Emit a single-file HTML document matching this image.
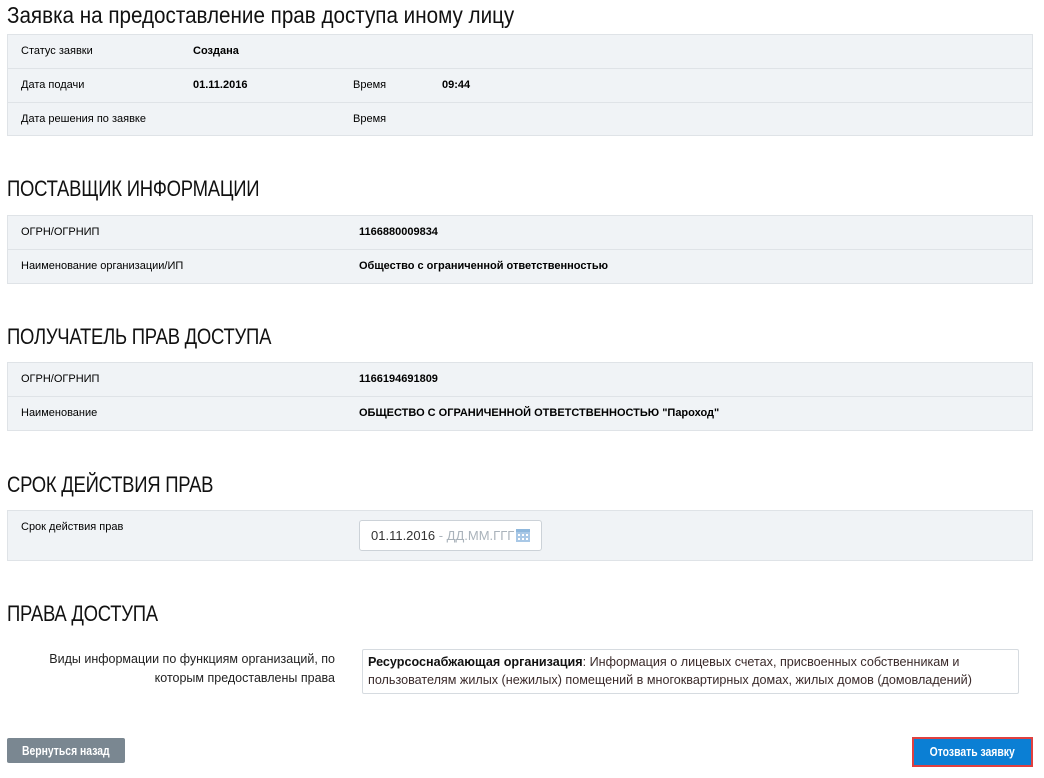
<!DOCTYPE html>
<html><head><meta charset="utf-8"><style>
*{margin:0;padding:0;box-sizing:border-box}
body{width:1044px;height:778px;background:#fff;font-family:"Liberation Sans",Arial,sans-serif;color:#000;position:relative;overflow:hidden}
.abs{position:absolute}
h1{position:absolute;left:7px;top:2px;font-size:23px;font-weight:normal;color:#111;transform:scaleX(0.897);transform-origin:0 0;white-space:nowrap}
h2{position:absolute;left:7px;font-size:22px;font-weight:normal;color:#111;letter-spacing:-0.3px;transform:scaleX(0.84);transform-origin:0 0;white-space:nowrap}
.tbl{position:absolute;left:7px;width:1026px;background:#f0f3f6;border:1px solid #dfe3e7}
.row{position:relative;height:34px;border-bottom:1px solid #dfe3e7;font-size:11px}
.row:last-child{border-bottom:none}
.row span{position:absolute;top:10px}
b{font-weight:bold}
.btn{position:absolute;color:#fff;font-size:13px;font-weight:bold;text-align:center}
.btn span{display:inline-block;transform:scaleX(0.8);white-space:nowrap}
</style></head><body>
<h1>Заявка на предоставление прав доступа иному лицу</h1>
<div class="tbl" style="top:34px;height:102px">
 <div class="row"><span style="left:13px">Статус заявки</span><span style="left:185px"><b>Создана</b></span></div>
 <div class="row"><span style="left:13px">Дата подачи</span><span style="left:185px"><b>01.11.2016</b></span><span style="left:345px">Время</span><span style="left:434px"><b>09:44</b></span></div>
 <div class="row"><span style="left:13px">Дата решения по заявке</span><span style="left:345px">Время</span></div>
</div>
<h2 style="top:176px">ПОСТАВЩИК ИНФОРМАЦИИ</h2>
<div class="tbl" style="top:215px;height:69px">
 <div class="row"><span style="left:13px">ОГРН/ОГРНИП</span><span style="left:351px"><b>1166880009834</b></span></div>
 <div class="row"><span style="left:13px">Наименование организации/ИП</span><span style="left:351px"><b>Общество с ограниченной ответственностью</b></span></div>
</div>
<h2 style="top:324px">ПОЛУЧАТЕЛЬ ПРАВ ДОСТУПА</h2>
<div class="tbl" style="top:362px;height:69px">
 <div class="row"><span style="left:13px">ОГРН/ОГРНИП</span><span style="left:351px"><b>1166194691809</b></span></div>
 <div class="row"><span style="left:13px">Наименование</span><span style="left:351px"><b>ОБЩЕСТВО С ОГРАНИЧЕННОЙ ОТВЕТСТВЕННОСТЬЮ "Пароход"</b></span></div>
</div>
<h2 style="top:472px">СРОК ДЕЙСТВИЯ ПРАВ</h2>
<div class="tbl" style="top:510px;height:51px">
 <span class="abs" style="left:13px;top:10px;font-size:11px">Срок действия прав</span>
 <div class="abs" style="left:351px;top:9px;width:183px;height:31px;background:#fff;border:1px solid #ccd2d8;border-radius:3px;font-size:13px;padding:7px 0 0 11px;color:#333;white-space:nowrap">01.11.2016 <span style="color:#aab3bb">- ДД.ММ.ГГГ</span>
  <svg class="abs" style="left:156px;top:8px" width="14" height="13" viewBox="0 0 14 13"><rect x="0" y="0" width="14" height="3" fill="#8fb8dd"/><rect x="0" y="3" width="14" height="10" fill="#a9c8e6"/><g fill="#fff"><rect x="2" y="5" width="2" height="2"/><rect x="6" y="5" width="2" height="2"/><rect x="10" y="5" width="2" height="2"/><rect x="2" y="9" width="2" height="2"/><rect x="6" y="9" width="2" height="2"/><rect x="10" y="9" width="2" height="2"/></g></svg>
 </div>
</div>
<h2 style="top:601px">ПРАВА ДОСТУПА</h2>
<div class="abs" style="left:15px;top:650px;width:320px;text-align:right;font-size:12.5px;line-height:19px;color:#222">Виды информации по функциям организаций, по которым предоставлены права</div>
<div class="abs" style="left:362px;top:649px;width:657px;height:45px;border:1px solid #d6dbe0;border-radius:2px;font-size:12.6px;line-height:18px;padding:3px 5px;color:#3a2a2a"><b style="color:#111">Ресурсоснабжающая организация</b>: Информация о лицевых счетах, присвоенных собственникам и пользователям жилых (нежилых) помещений в многоквартирных домах, жилых домов (домовладений)</div>
<div class="btn" style="left:7px;top:738px;width:118px;height:25px;background:#7a8791;border-radius:2px;line-height:25px"><span>Вернуться назад</span></div>
<div class="btn" style="left:912px;top:737px;width:121px;height:30px;background:#0b7fd4;border:2px solid #e04040;line-height:26px"><span>Отозвать заявку</span></div>
</body></html>
